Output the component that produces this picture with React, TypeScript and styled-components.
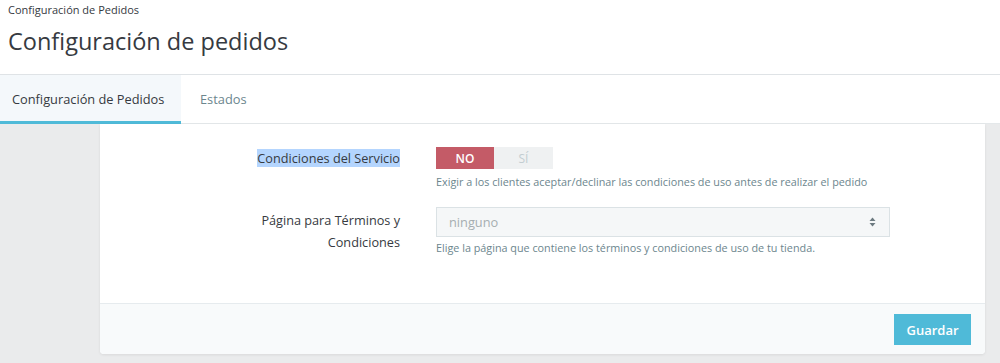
import React from "react";
import styled, { createGlobalStyle } from "styled-components";

const Global = createGlobalStyle`
  html, body { margin: 0; padding: 0; background: #fff; }
  body { font-family: "Open Sans", "Noto Sans", sans-serif; color: #363a41; width: 1000px; height: 363px; overflow: hidden; }
  * { box-sizing: border-box; }
`;

const Page = styled.div`
  display: flex;
  flex-direction: column;
  height: 363px;
`;

const Header = styled.header`
  background: #fff;
  padding: 3px 8px 17px;
  border-bottom: 1px solid #dfe3e6;
  display: flex;
  flex-direction: column;
  gap: 9px;
`;

const Breadcrumb = styled.div`
  font-size: 11px;
  line-height: 14px;
  color: #363a41;
`;

const Title = styled.h1`
  margin: 0;
  font-size: 23.5px;
  line-height: 31px;
  font-weight: 400;
  color: #363a41;
`;

const Tabs = styled.nav`
  display: flex;
  height: 49px;
  background: #fff;
  border-bottom: 1px solid #e4e8ea;
`;

const Tab = styled.div<{ $active?: boolean }>`
  display: flex;
  align-items: center;
  white-space: nowrap;
  padding: ${(p) => (p.$active ? "1px 0 0 12px" : "1px 20px 0 19px")};
  width: ${(p) => (p.$active ? "181px" : "auto")};
  height: 49px;
  margin-bottom: -1px;
  font-size: 12.8px;
  color: ${(p) => (p.$active ? "#363a41" : "#6c868e")};
  background: ${(p) => (p.$active ? "#f4f8fb" : "transparent")};
  border-bottom: 3px solid ${(p) => (p.$active ? "#4fbad8" : "transparent")};
`;

const Content = styled.main`
  flex: 1;
  background: #eaebec;
  padding: 0 15px 0 100px;
`;

const Panel = styled.section`
  background: #fff;
  border-radius: 0 0 4px 4px;
  box-shadow: 0 1px 3px rgba(0, 0, 0, 0.08);
`;

const Body = styled.div`
  padding: 23px 0 48px;
  display: flex;
  flex-direction: column;
  gap: 18px;
`;

const Row = styled.div`
  display: grid;
  grid-template-columns: 300px 454px;
  column-gap: 36px;
`;

const Label = styled.div<{ $pad: number; $lh: number }>`
  text-align: right;
  font-size: 12.7px;
  line-height: ${(p) => p.$lh}px;
  padding-top: ${(p) => p.$pad}px;
  color: #363a41;
`;

const Selected = styled.span`
  background: #b4d5fe;
`;

const Control = styled.div`
  display: flex;
  flex-direction: column;
  align-items: flex-start;
`;

const Switch = styled.div`
  display: flex;
  height: 22px;
`;

const SwitchOpt = styled.span<{ $on?: boolean }>`
  width: ${(p) => (p.$on ? "58px" : "59px")};
  display: flex;
  align-items: center;
  justify-content: center;
  font-size: 12px;
  font-weight: ${(p) => (p.$on ? 600 : 400)};
  color: ${(p) => (p.$on ? "#fff" : "#c3cdd1")};
  background: ${(p) => (p.$on ? "#c45b67" : "#eff1f2")};
`;

const Help = styled.p<{ $mt: number }>`
  margin: ${(p) => p.$mt}px 0 0;
  font-size: 10.8px;
  line-height: 14px;
  color: #6c868e;
`;

const Select = styled.div`
  width: 454px;
  height: 30px;
  border: 1px solid #dbe2e5;
  background: #f5f7f8;
  display: flex;
  align-items: center;
  justify-content: space-between;
  padding: 0 13px 0 12px;
  font-size: 12.8px;
  color: #a6aeb1;
`;

const Footer = styled.div`
  border-top: 1px solid #e6ebee;
  background: #f8fafb;
  border-radius: 0 0 4px 4px;
  padding: 10px 14px 9px;
  display: flex;
  justify-content: flex-end;
`;

const SaveButton = styled.button`
  width: 77px;
  height: 31px;
  border: none;
  background: #4fbad8;
  color: #fff;
  font-family: "Open Sans", sans-serif;
  font-size: 13px;
  font-weight: 600;
  padding: 0;
`;

const Arrows = () => (
  <svg width="7" height="10" viewBox="0 0 7 10">
    <polygon points="3.5,0.5 6.5,4 0.5,4" fill="#6c7a80" />
    <polygon points="0.5,6 6.5,6 3.5,9.5" fill="#6c7a80" />
  </svg>
);

export default function App() {
  return (
    <Page>
      <Global />
      <Header>
        <Breadcrumb>Configuración de Pedidos</Breadcrumb>
        <Title>Configuración de pedidos</Title>
      </Header>
      <Tabs>
        <Tab $active>Configuración de Pedidos</Tab>
        <Tab>Estados</Tab>
      </Tabs>
      <Content>
        <Panel>
          <Body>
            <Row>
              <Label $pad={1} $lh={20}>
                <Selected>Condiciones del Servicio</Selected>
              </Label>
              <Control>
                <Switch>
                  <SwitchOpt $on>NO</SwitchOpt>
                  <SwitchOpt>SÍ</SwitchOpt>
                </Switch>
                <Help $mt={6}>
                  Exigir a los clientes aceptar/declinar las condiciones de uso antes de realizar el pedido
                </Help>
              </Control>
            </Row>
            <Row>
              <Label $pad={2} $lh={22}>
                Página para Términos y
                <br />
                Condiciones
              </Label>
              <Control>
                <Select>
                  <span>ninguno</span>
                  <Arrows />
                </Select>
                <Help $mt={4}>
                  Elige la página que contiene los términos y condiciones de uso de tu tienda.
                </Help>
              </Control>
            </Row>
          </Body>
          <Footer>
            <SaveButton>Guardar</SaveButton>
          </Footer>
        </Panel>
      </Content>
    </Page>
  );
}
